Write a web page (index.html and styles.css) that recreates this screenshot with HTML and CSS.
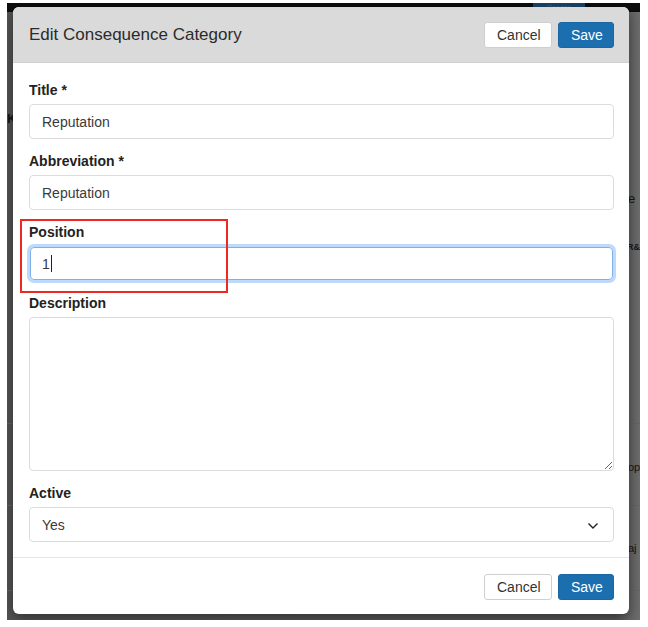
FILE: index.html
```html
<!DOCTYPE html>
<html>
<head>
<meta charset="utf-8">
<link rel="stylesheet" href="styles.css">
</head>
<body>
<div class="shot">
  <div class="topbar"><span class="create">Create</span></div>
  <div class="bg-text bg-k">K</div>
  <div class="bg-text bg-e">e</div>
  <div class="bg-text bg-r">R&amp;</div>
  <div class="bg-text bg-op">op</div>
  <div class="bg-text bg-aj">aj</div>
  <div class="bg-line bg-line1"></div>
  <div class="bg-line bg-line2"></div>
  <div class="bg-line bg-line3"></div>
  <div class="modal">
    <div class="modal-header">
      <h1 class="modal-title">Edit Consequence Category</h1>
      <div class="actions">
        <button class="btn btn-default">Cancel</button>
        <button class="btn btn-primary">Save</button>
      </div>
    </div>
    <div class="modal-body">
      <div class="group">
        <label class="label">Title *</label>
        <div class="input">Reputation</div>
      </div>
      <div class="group">
        <label class="label">Abbreviation *</label>
        <div class="input">Reputation</div>
      </div>
      <div class="group">
        <label class="label">Position</label>
        <div class="input focused">1<span class="caret"></span></div>
      </div>
      <div class="group">
        <label class="label">Description</label>
        <textarea class="textarea"></textarea>
      </div>
      <div class="group last">
        <label class="label">Active</label>
        <div class="input select">
          <span>Yes</span>
          <svg class="chev" width="12" height="8" viewBox="0 0 12 8"><path d="M1.5 1.5 L6 6 L10.5 1.5" fill="none" stroke="#222" stroke-width="1.4"/></svg>
        </div>
      </div>
    </div>
    <div class="modal-footer">
      <button class="btn btn-default">Cancel</button>
      <button class="btn btn-primary">Save</button>
    </div>
    <div class="highlight"></div>
  </div>
</div>
</body>
</html>
```

FILE: styles.css
```css
html, body {
  margin: 0;
  padding: 0;
  background: #ffffff;
  font-family: "Liberation Sans", Arial, sans-serif;
}

.shot {
  position: relative;
  margin-left: 7px;
  margin-top: 3px;
  width: 633px;
  height: 617px;
  background: linear-gradient(to right, #555555 0%, #5a5a5a 96%, #6e6e6e 100%);
  padding: 4px 0 0 6px;
  box-sizing: border-box;
  overflow: hidden;
}

.topbar {
  position: absolute;
  left: 0;
  top: 0;
  width: 100%;
  height: 9px;
  background: #0d0d0d;
}

.create {
  position: absolute;
  left: 526px;
  top: 0;
  width: 52px;
  height: 10px;
  background: #1b4668;
  color: #4f6579;
  font-size: 8px;
  line-height: 10px;
  text-align: center;
}

.bg-text {
  position: absolute;
  color: #151515;
  font-size: 13px;
  font-weight: bold;
}
.bg-k { left: 0; top: 108px; }
.bg-e { left: 621px; top: 188px; font-weight: normal; }
.bg-r { left: 620px; top: 239px; font-size: 9px; }
.bg-op { left: 621px; top: 458px; font-weight: normal; font-size: 11px; }
.bg-aj { left: 621px; top: 539px; font-weight: normal; font-size: 11px; }

.bg-line {
  position: absolute;
  left: 0;
  width: 100%;
  height: 1px;
  background: #666;
}
.bg-line1 { top: 420px; }
.bg-line2 { top: 502px; }
.bg-line3 { top: 587px; }

.modal {
  position: relative;
  width: 616px;
  background: #ffffff;
  border-radius: 6px;
  box-shadow: 0 4px 14px rgba(0, 0, 0, 0.45);
  overflow: hidden;
  z-index: 1;
}

.modal-header {
  height: 56px;
  background: #dadada;
  display: flex;
  align-items: center;
  justify-content: space-between;
  padding: 0 15px 0 16px;
  box-sizing: border-box;
  border-bottom: 1px solid #d0d0d0;
}

.modal-title {
  margin: 0;
  font-size: 17px;
  font-weight: normal;
  color: #2b2b2b;
}

.actions {
  display: flex;
  gap: 6px;
  margin-top: 1px;
}

.btn {
  font-family: "Liberation Sans", Arial, sans-serif;
  font-size: 14px;
  height: 26px;
  padding: 0 12px;
  border-radius: 3px;
  box-sizing: border-box;
  cursor: pointer;
}

.btn-default {
  width: 68px;
  background: #ffffff;
  border: 1px solid #cfcfcf;
  color: #333;
}

.btn-primary {
  width: 56px;
  background: #1c6fae;
  border: 1px solid #1a67a3;
  color: #ffffff;
}

.modal-body {
  padding: 17px 15px 15px 16px;
}

.group {
  display: flex;
  flex-direction: column;
  margin-bottom: 12px;
}
.group.last { margin-bottom: 0; }

.label {
  font-size: 14px;
  font-weight: bold;
  color: #222;
  line-height: 20px;
  margin-bottom: 4px;
}

.input {
  height: 35px;
  box-sizing: border-box;
  border: 1px solid #dcdcdc;
  border-radius: 4px;
  padding: 0 12px;
  display: flex;
  align-items: center;
  font-size: 14px;
  color: #3a3a3a;
}

.input.focused {
  border: 1px solid #7eb0ea;
  box-shadow: 0 0 0 3px #bdd9fb;
  height: 33px;
  margin: 1px 1px 1px 1px;
  padding-left: 11px;
}

.caret {
  display: inline-block;
  width: 1px;
  height: 17px;
  background: #222;
  margin-left: 1px;
}

.textarea {
  height: 154px;
  box-sizing: border-box;
  border: 1px solid #dcdcdc;
  border-radius: 4px;
  resize: vertical;
  font-family: "Liberation Sans", Arial, sans-serif;
  font-size: 14px;
  outline: none;
  margin: 0;
}

.select {
  justify-content: space-between;
  padding-right: 14px;
}

.chev { display: block; margin-top: 2px; }

.modal-footer {
  border-top: 1px solid #e5e5e5;
  display: flex;
  justify-content: flex-end;
  gap: 6px;
  padding: 16px 15px 14px 16px;
}

.highlight {
  position: absolute;
  left: 7px;
  top: 212px;
  width: 208px;
  height: 74px;
  border: 2px solid #ec2a22;
  box-sizing: border-box;
}
```
